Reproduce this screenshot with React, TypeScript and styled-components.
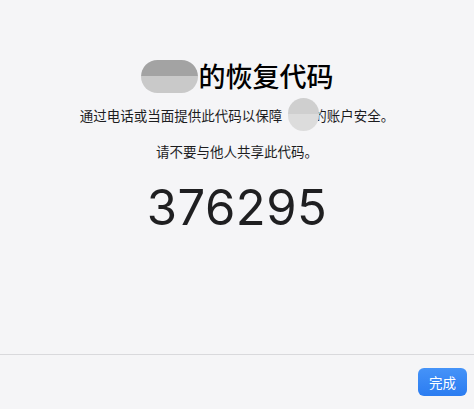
import React from "react";
import styled, { createGlobalStyle } from "styled-components";

const GlobalStyle = createGlobalStyle`
  html, body {
    margin: 0;
    padding: 0;
    background: #f5f5f7;
  }
  body {
    font-family: "Noto Sans CJK SC", "Noto Sans", sans-serif;
    color: #1d1d1f;
  }
`;

const Page = styled.div`
  width: 474px;
  height: 409px;
  display: flex;
  flex-direction: column;
  background: #f5f5f7;
`;

const Main = styled.main`
  flex: 1;
  display: flex;
  flex-direction: column;
  align-items: center;
  padding-top: 55px;
`;

const Title = styled.h1`
  margin: 0;
  font-size: 27px;
  line-height: 42px;
  font-weight: 500;
  color: #000;
  letter-spacing: 0;
  display: flex;
  align-items: center;
`;

const Redacted = styled.span<{ $w: number; $h: number; $tone: "dark" | "light" }>`
  position: relative;
  display: inline-block;
  width: ${(p) => p.$w}px;
  height: ${(p) => p.$h}px;
  border-radius: ${(p) => p.$h / 2}px;
  vertical-align: middle;
  background: ${(p) =>
    p.$tone === "dark"
      ? "linear-gradient(to bottom, #a3a3a3 0 50%, #c9c9c9 50% 100%)"
      : "linear-gradient(to bottom, #cfcfcf 0 50%, #dcdcdc 50% 100%)"};
`;

const Text = styled.p<{ $mt: number }>`
  margin: ${(p) => p.$mt}px 0 0;
  font-size: 13.5px;
  line-height: 20px;
  color: #1d1d1f;
  display: flex;
  align-items: center;
`;

const Code = styled.div`
  margin-top: 17px;
  font-family: Inter, "Noto Sans", sans-serif;
  font-size: 49px;
  line-height: 60px;
  font-weight: 400;
  letter-spacing: 0.5px;
  color: #1f1f21;
`;

const Footer = styled.footer`
  height: 54px;
  border-top: 1px solid #d9d9dc;
  display: flex;
  align-items: center;
  justify-content: flex-end;
  padding: 0 7px;
`;

const DoneButton = styled.button`
  width: 49px;
  height: 28px;
  border: none;
  border-radius: 6px;
  background: linear-gradient(to bottom, #4593f8, #2b7cf1);
  color: #fff;
  font-family: "Noto Sans CJK SC", sans-serif;
  font-size: 13.5px;
  padding: 0;
  cursor: pointer;
`;

export default function App() {
  return (
    <>
      <GlobalStyle />
      <Page>
        <Main>
          <Title>
            <Redacted $w={57} $h={33} $tone="dark" style={{ marginRight: 1 }} />
            的恢复代码
          </Title>
          <Text $mt={1}>
            通过电话或当面提供此代码以保障
            <Redacted $w={31} $h={33} $tone="light" style={{ marginLeft: 6, marginRight: -6, zIndex: 1 }} />
            的账户安全。
          </Text>
          <Text $mt={10}>请不要与他人共享此代码。</Text>
          <Code>376295</Code>
        </Main>
        <Footer>
          <DoneButton>完成</DoneButton>
        </Footer>
      </Page>
    </>
  );
}
